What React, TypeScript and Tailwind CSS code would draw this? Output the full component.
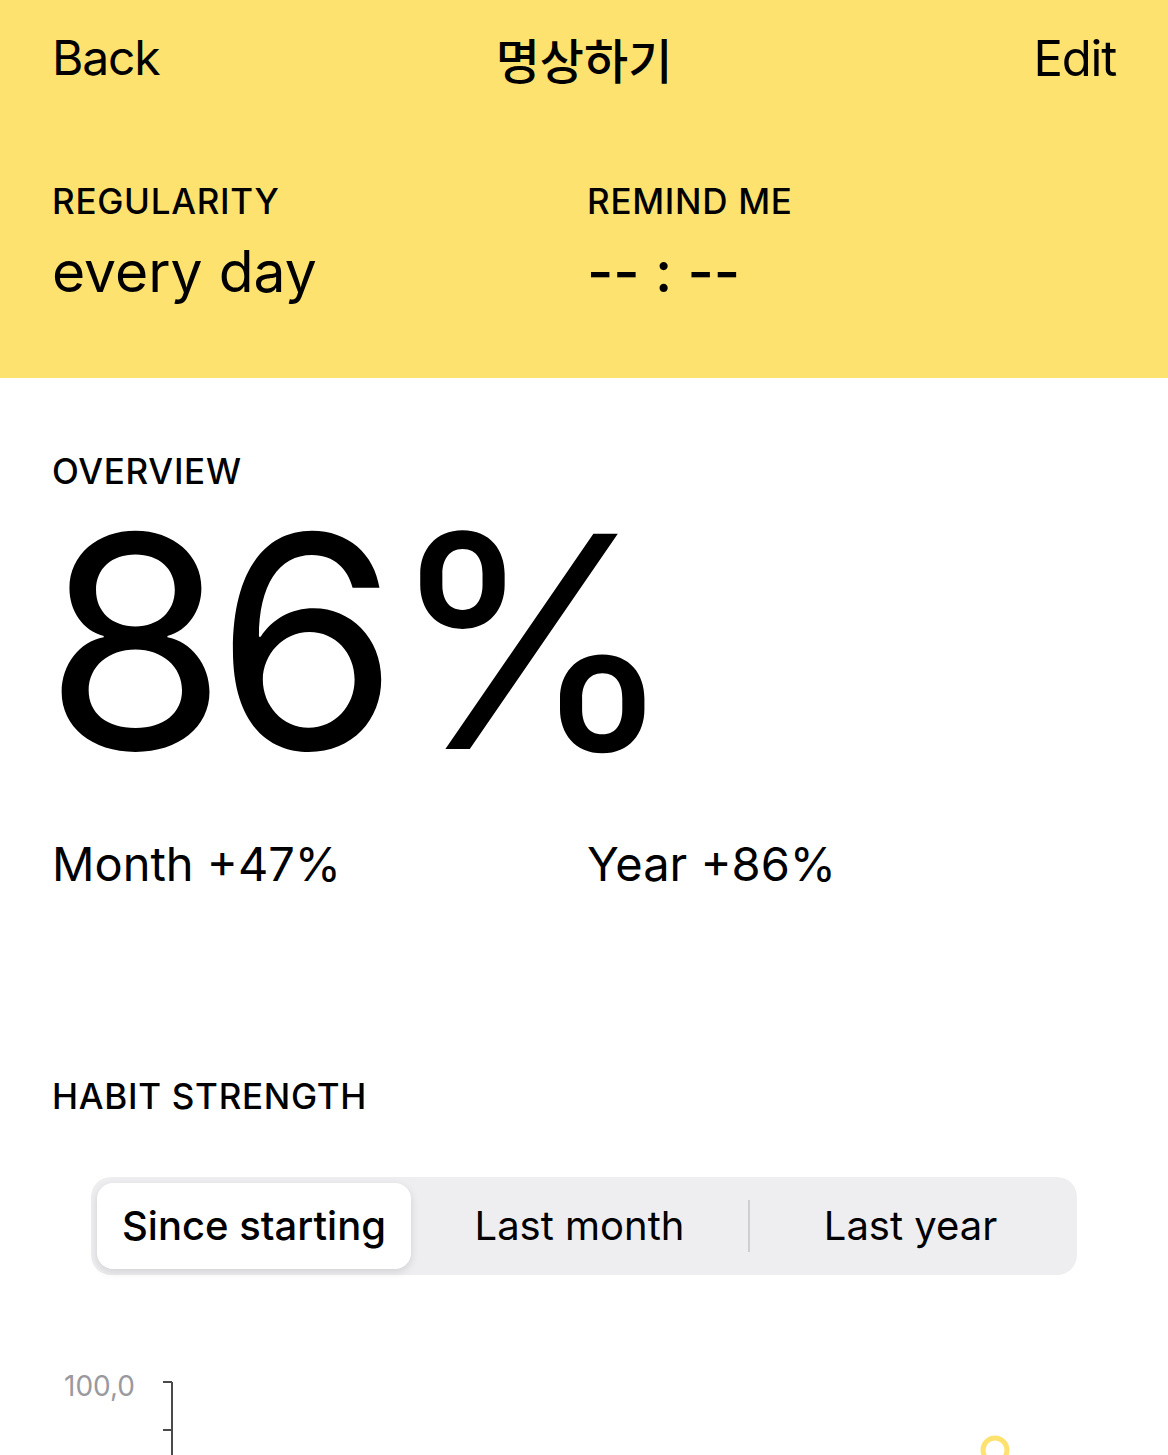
export default function App() {
  return (
    <div className="w-[1168px] h-[1455px] overflow-hidden bg-white text-black font-['Inter','Noto_Sans_CJK_KR',sans-serif]">
      {/* Yellow header */}
      <div className="bg-[#fee26f] h-[378px] px-[52px]">
        <div className="h-[116px] grid grid-cols-[1fr_auto_1fr] items-center">
          <span className="text-[48px] leading-none tracking-tight">Back</span>
          <span className="text-[48px] leading-none font-medium font-['Noto_Sans_CJK_KR',sans-serif]">명상하기</span>
          <span className="text-[49px] leading-none tracking-tight text-right">Edit</span>
        </div>
        <div className="grid grid-cols-[535px_1fr] mt-[68px]">
          <div>
            <div className="text-[35px] leading-none font-medium tracking-[0.02em]">REGULARITY</div>
            <div className="text-[57px] leading-none mt-[24px]">every day</div>
          </div>
          <div>
            <div className="text-[35px] leading-none font-medium tracking-[0.02em]">REMIND ME</div>
            <div className="text-[57px] leading-none mt-[24px] font-medium">-- : --</div>
          </div>
        </div>
      </div>

      {/* Overview */}
      <div className="px-[52px] pt-[76px]">
        <div className="text-[35px] leading-none font-medium tracking-[0.02em]">OVERVIEW</div>
        <div className="text-[296px] leading-none tracking-[-0.04em] -ml-[8px] mt-[4px]">86%</div>
        <div className="grid grid-cols-[535px_1fr] mt-[51px]">
          <div className="text-[47px] leading-none">Month +47%</div>
          <div className="text-[47px] leading-none">Year +86%</div>
        </div>

        <div className="text-[35px] leading-none font-medium tracking-[0.02em] mt-[192px]">HABIT STRENGTH</div>
      </div>

      {/* Segmented control */}
      <div className="px-[91px] mt-[63px]">
        <div className="h-[98px] rounded-[20px] bg-[#eeeef0] p-[6px] flex items-center">
          <div className="w-[314px] h-full rounded-[16px] bg-white shadow-[0_3px_8px_rgba(0,0,0,0.12)] flex items-center justify-center text-[40px] font-medium">
            Since starting
          </div>
          <div className="w-[337px] flex items-center justify-center text-[40px]">Last month</div>
          <div className="w-[2px] h-[52px] bg-[#cfcfd3]"></div>
          <div className="flex-1 flex items-center justify-center text-[40px]">Last year</div>
        </div>
      </div>

      {/* Chart start */}
      <div className="relative mt-[97px] h-[120px]">
        <span className="absolute left-[64px] top-0 text-[28px] leading-none text-[#9a9a9e]">100,0</span>
        <svg className="absolute left-0 top-0" width="1168" height="120">
          <line x1="172" y1="10" x2="172" y2="120" stroke="#4a4a4a" strokeWidth="2" />
          <line x1="163" y1="10" x2="172" y2="10" stroke="#4a4a4a" strokeWidth="2" />
          <line x1="163" y1="58" x2="172" y2="58" stroke="#4a4a4a" strokeWidth="2" />
          <circle cx="995" cy="78" r="12" fill="white" stroke="#fee26f" strokeWidth="5" />
        </svg>
      </div>
    </div>
  );
}
